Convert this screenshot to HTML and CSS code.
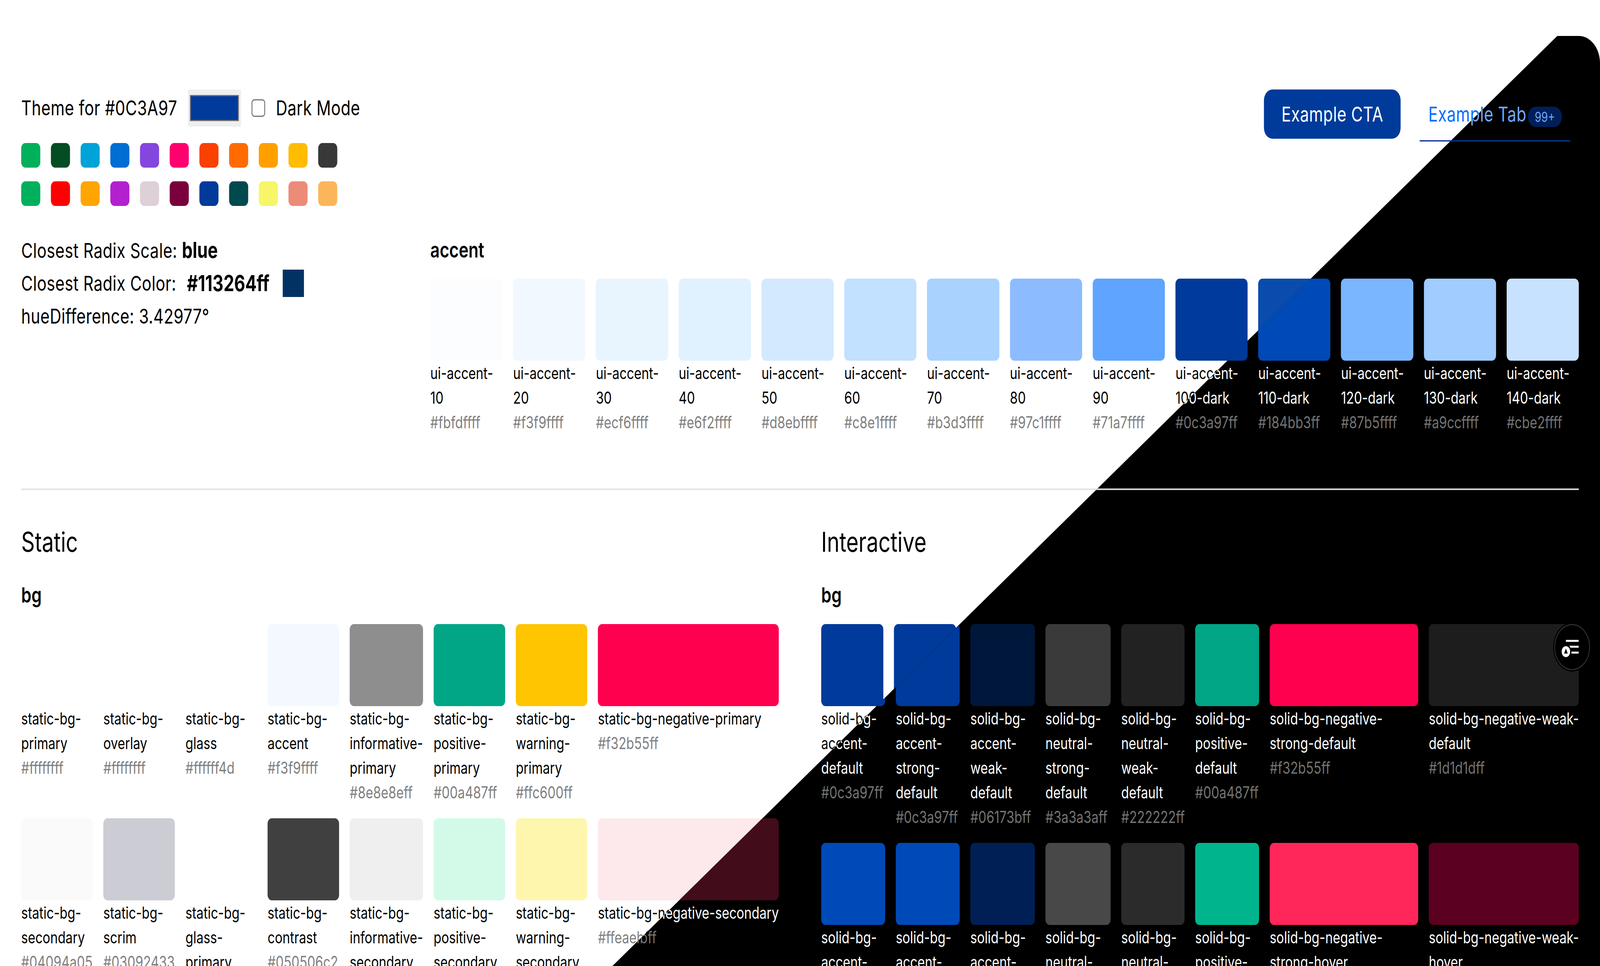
FILE: index.html
```html
<!DOCTYPE html>
<html lang="en">
<head>
<meta charset="utf-8">
<title>Theme preview</title>
<link rel="stylesheet" href="styles.css">
</head>
<body>
<div class="page">

<div class="sheet light">
  <header class="head">
    <div class="brand">
      <div class="picker-row">
        <span>Theme for #0C3A97</span>
        <input class="picker" type="color" value="#003a9b" aria-label="Theme colour">
        <input class="check" type="checkbox" id="dm-l">
        <label for="dm-l">Dark Mode</label>
      </div>
      <div class="presets">
        <i style="background:#00b05c"></i><i style="background:#044d24"></i><i style="background:#00a3d7"></i><i style="background:#006ed3"></i><i style="background:#8347dd"></i><i style="background:#ff006e"></i><i style="background:#fa4100"></i><i style="background:#ff6b00"></i><i style="background:#ffa000"></i><i style="background:#ffbc00"></i><i style="background:#383838"></i>
        <i style="background:#00b05c"></i><i style="background:#ff0000"></i><i style="background:#ffa500"></i><i style="background:#b320cf"></i><i style="background:#ddd0d6"></i><i style="background:#7a003d"></i><i style="background:#003a9b"></i><i style="background:#004a4e"></i><i style="background:#f6f668"></i><i style="background:#ec8b77"></i><i style="background:#fbb65c"></i>
      </div>
    </div>
    <div class="actions">
      <button class="cta" type="button">Example CTA</button>
      <div class="tab"><span>Example Tab</span><span class="badge">99+</span></div>
    </div>
  </header>
  <section class="radix">
    <div class="info">
      <p>Closest Radix Scale: <b>blue</b></p>
      <p class="info-color"><span>Closest Radix Color:</span><b>#113264ff</b><i class="radix-sq"></i></p>
      <p>hueDifference: 3.42977°</p>
    </div>
    <div class="accent">
      <h3>accent</h3>
      <div class="scale">
        <div class="tok"><div class="sw" style="background:#fbfdff"></div><p class="nm">ui-accent-10</p><p class="hx">#fbfdffff</p></div>
        <div class="tok"><div class="sw" style="background:#f1f8ff"></div><p class="nm">ui-accent-20</p><p class="hx">#f3f9ffff</p></div>
        <div class="tok"><div class="sw" style="background:#e8f5ff"></div><p class="nm">ui-accent-30</p><p class="hx">#ecf6ffff</p></div>
        <div class="tok"><div class="sw" style="background:#e0f1ff"></div><p class="nm">ui-accent-40</p><p class="hx">#e6f2ffff</p></div>
        <div class="tok"><div class="sw" style="background:#d3e9ff"></div><p class="nm">ui-accent-50</p><p class="hx">#d8ebffff</p></div>
        <div class="tok"><div class="sw" style="background:#c2e0ff"></div><p class="nm">ui-accent-60</p><p class="hx">#c8e1ffff</p></div>
        <div class="tok"><div class="sw" style="background:#a9d2ff"></div><p class="nm">ui-accent-70</p><p class="hx">#b3d3ffff</p></div>
        <div class="tok"><div class="sw" style="background:#8cbcff"></div><p class="nm">ui-accent-80</p><p class="hx">#97c1ffff</p></div>
        <div class="tok"><div class="sw" style="background:#5fa4ff"></div><p class="nm">ui-accent-90</p><p class="hx">#71a7ffff</p></div>
        <div class="tok"><div class="sw" style="background:#003a9b"></div><p class="nm">ui-accent-100-dark</p><p class="hx">#0c3a97ff</p></div>
        <div class="tok"><div class="sw" style="background:#0a4cad"></div><p class="nm">ui-accent-110-dark</p><p class="hx">#184bb3ff</p></div>
        <div class="tok"><div class="sw" style="background:#7ab5ff"></div><p class="nm">ui-accent-120-dark</p><p class="hx">#87b5ffff</p></div>
        <div class="tok"><div class="sw" style="background:#a0ccff"></div><p class="nm">ui-accent-130-dark</p><p class="hx">#a9ccffff</p></div>
        <div class="tok"><div class="sw" style="background:#c6e2ff"></div><p class="nm">ui-accent-140-dark</p><p class="hx">#cbe2ffff</p></div>
      </div>
    </div>
  </section>
  <hr class="rule">
  <section class="cols">
    <div class="col">
      <h2>Static</h2>
      <h3>bg</h3>
      <div class="tokens static">
        <div class="tok"><div class="sw" style="background:#ffffff"></div><p class="nm">static-bg-primary</p><p class="hx">#ffffffff</p></div>
        <div class="tok"><div class="sw" style="background:#ffffff"></div><p class="nm">static-bg-overlay</p><p class="hx">#ffffffff</p></div>
        <div class="tok"><div class="sw" style="background:#ffffff"></div><p class="nm">static-bg-glass</p><p class="hx">#ffffff4d</p></div>
        <div class="tok"><div class="sw" style="background:#f3f9ff"></div><p class="nm">static-bg-accent</p><p class="hx">#f3f9ffff</p></div>
        <div class="tok"><div class="sw" style="background:#8e8e8e"></div><p class="nm">static-bg-informative-primary</p><p class="hx">#8e8e8eff</p></div>
        <div class="tok"><div class="sw" style="background:#00a686"></div><p class="nm">static-bg-positive-primary</p><p class="hx">#00a487ff</p></div>
        <div class="tok"><div class="sw" style="background:#ffc500"></div><p class="nm">static-bg-warning-primary</p><p class="hx">#ffc600ff</p></div>
        <div class="tok"><div class="sw" style="background:#ff004f"></div><p class="nm">static-bg-negative-primary</p><p class="hx">#f32b55ff</p></div>
        <div class="tok"><div class="sw" style="background:#fafafa"></div><p class="nm">static-bg-secondary</p><p class="hx">#04094a05</p></div>
        <div class="tok"><div class="sw" style="background:#cbccd4"></div><p class="nm">static-bg-scrim</p><p class="hx">#03092433</p></div>
        <div class="tok"><div class="sw" style="background:#ffffff"></div><p class="nm">static-bg-glass-primary</p><p class="hx">#ffffff99</p></div>
        <div class="tok"><div class="sw" style="background:#404040"></div><p class="nm">static-bg-contrast</p><p class="hx">#050506c2</p></div>
        <div class="tok"><div class="sw" style="background:#efefef"></div><p class="nm">static-bg-informative-secondary</p><p class="hx">#f0f0f0ff</p></div>
        <div class="tok"><div class="sw" style="background:#d3fae8"></div><p class="nm">static-bg-positive-secondary</p><p class="hx">#d6f9e9ff</p></div>
        <div class="tok"><div class="sw" style="background:#fff6ae"></div><p class="nm">static-bg-warning-secondary</p><p class="hx">#fff6b2ff</p></div>
        <div class="tok"><div class="sw" style="background:#fde8eb"></div><p class="nm">static-bg-negative-secondary</p><p class="hx">#ffeaebff</p></div>
      </div>
    </div>
    <div class="col">
      <h2>Interactive</h2>
      <h3>bg</h3>
      <div class="tokens solid">
        <div class="tok"><div class="sw" style="background:#003a9b"></div><p class="nm">solid-bg-accent-default</p><p class="hx">#0c3a97ff</p></div>
        <div class="tok"><div class="sw" style="background:#003a9b"></div><p class="nm">solid-bg-accent-strong-default</p><p class="hx">#0c3a97ff</p></div>
        <div class="tok"><div class="sw" style="background:#00173c"></div><p class="nm">solid-bg-accent-weak-default</p><p class="hx">#06173bff</p></div>
        <div class="tok"><div class="sw" style="background:#3a3a3a"></div><p class="nm">solid-bg-neutral-strong-default</p><p class="hx">#3a3a3aff</p></div>
        <div class="tok"><div class="sw" style="background:#222222"></div><p class="nm">solid-bg-neutral-weak-default</p><p class="hx">#222222ff</p></div>
        <div class="tok"><div class="sw" style="background:#00a686"></div><p class="nm">solid-bg-positive-default</p><p class="hx">#00a487ff</p></div>
        <div class="tok"><div class="sw" style="background:#ff004f"></div><p class="nm">solid-bg-negative-strong-default</p><p class="hx">#f32b55ff</p></div>
        <div class="tok"><div class="sw" style="background:#1d1d1d"></div><p class="nm">solid-bg-negative-weak-default</p><p class="hx">#1d1d1dff</p></div>
      </div>
    </div>
  </section>
</div>

<div class="dark">
<div class="sheet night">
  <header class="head">
    <div class="brand">
      <div class="picker-row">
        <span>Theme for #0C3A97</span>
        <input class="picker" type="color" value="#003a9b" aria-label="Theme colour, dark">
        <input class="check" type="checkbox" id="dm-d">
        <label for="dm-d">Dark Mode</label>
      </div>
      <div class="presets">
        <i style="background:#00b05c"></i><i style="background:#044d24"></i><i style="background:#00a3d7"></i><i style="background:#006ed3"></i><i style="background:#8347dd"></i><i style="background:#ff006e"></i><i style="background:#fa4100"></i><i style="background:#ff6b00"></i><i style="background:#ffa000"></i><i style="background:#ffbc00"></i><i style="background:#383838"></i>
        <i style="background:#00b05c"></i><i style="background:#ff0000"></i><i style="background:#ffa500"></i><i style="background:#b320cf"></i><i style="background:#ddd0d6"></i><i style="background:#7a003d"></i><i style="background:#003a9b"></i><i style="background:#004a4e"></i><i style="background:#f6f668"></i><i style="background:#ec8b77"></i><i style="background:#fbb65c"></i>
      </div>
    </div>
    <div class="actions">
      <button class="cta" type="button">Example CTA</button>
      <div class="tab"><span>Example Tab</span><span class="badge">99+</span></div>
    </div>
  </header>
  <section class="radix">
    <div class="info">
      <p>Closest Radix Scale: <b>blue</b></p>
      <p class="info-color"><span>Closest Radix Color:</span><b>#113264ff</b><i class="radix-sq"></i></p>
      <p>hueDifference: 3.42977°</p>
    </div>
    <div class="accent">
      <h3>accent</h3>
      <div class="scale">
        <div class="tok"><div class="sw" style="background:#fbfdff"></div><p class="nm">ui-accent-10</p><p class="hx">#fbfdffff</p></div>
        <div class="tok"><div class="sw" style="background:#f1f8ff"></div><p class="nm">ui-accent-20</p><p class="hx">#f3f9ffff</p></div>
        <div class="tok"><div class="sw" style="background:#e8f5ff"></div><p class="nm">ui-accent-30</p><p class="hx">#ecf6ffff</p></div>
        <div class="tok"><div class="sw" style="background:#e0f1ff"></div><p class="nm">ui-accent-40</p><p class="hx">#e6f2ffff</p></div>
        <div class="tok"><div class="sw" style="background:#d3e9ff"></div><p class="nm">ui-accent-50</p><p class="hx">#d8ebffff</p></div>
        <div class="tok"><div class="sw" style="background:#c2e0ff"></div><p class="nm">ui-accent-60</p><p class="hx">#c8e1ffff</p></div>
        <div class="tok"><div class="sw" style="background:#a9d2ff"></div><p class="nm">ui-accent-70</p><p class="hx">#b3d3ffff</p></div>
        <div class="tok"><div class="sw" style="background:#8cbcff"></div><p class="nm">ui-accent-80</p><p class="hx">#97c1ffff</p></div>
        <div class="tok"><div class="sw" style="background:#5fa4ff"></div><p class="nm">ui-accent-90</p><p class="hx">#71a7ffff</p></div>
        <div class="tok"><div class="sw" style="background:#003a9b"></div><p class="nm">ui-accent-100-dark</p><p class="hx">#0c3a97ff</p></div>
        <div class="tok"><div class="sw" style="background:#004ab8"></div><p class="nm">ui-accent-110-dark</p><p class="hx">#184bb3ff</p></div>
        <div class="tok"><div class="sw" style="background:#7ab5ff"></div><p class="nm">ui-accent-120-dark</p><p class="hx">#87b5ffff</p></div>
        <div class="tok"><div class="sw" style="background:#a0ccff"></div><p class="nm">ui-accent-130-dark</p><p class="hx">#a9ccffff</p></div>
        <div class="tok"><div class="sw" style="background:#c6e2ff"></div><p class="nm">ui-accent-140-dark</p><p class="hx">#cbe2ffff</p></div>
      </div>
    </div>
  </section>
  <hr class="rule">
  <section class="cols">
    <div class="col">
      <h2>Static</h2>
      <h3>bg</h3>
      <div class="tokens static">
        <div class="tok"><div class="sw" style="background:#000000"></div><p class="nm">static-bg-primary</p><p class="hx">#000000ff</p></div>
        <div class="tok"><div class="sw" style="background:#111111"></div><p class="nm">static-bg-overlay</p><p class="hx">#111111ff</p></div>
        <div class="tok"><div class="sw" style="background:#000000"></div><p class="nm">static-bg-glass</p><p class="hx">#0000004d</p></div>
        <div class="tok"><div class="sw" style="background:#06173b"></div><p class="nm">static-bg-accent</p><p class="hx">#06173bff</p></div>
        <div class="tok"><div class="sw" style="background:#8e8e8e"></div><p class="nm">static-bg-informative-primary</p><p class="hx">#8e8e8eff</p></div>
        <div class="tok"><div class="sw" style="background:#00a686"></div><p class="nm">static-bg-positive-primary</p><p class="hx">#00a487ff</p></div>
        <div class="tok"><div class="sw" style="background:#ffc500"></div><p class="nm">static-bg-warning-primary</p><p class="hx">#ffc600ff</p></div>
        <div class="tok"><div class="sw" style="background:#ff004f"></div><p class="nm">static-bg-negative-primary</p><p class="hx">#f32b55ff</p></div>
        <div class="tok"><div class="sw" style="background:#111111"></div><p class="nm">static-bg-secondary</p><p class="hx">#ffffff08</p></div>
        <div class="tok"><div class="sw" style="background:#333333"></div><p class="nm">static-bg-scrim</p><p class="hx">#00000080</p></div>
        <div class="tok"><div class="sw" style="background:#000000"></div><p class="nm">static-bg-glass-primary</p><p class="hx">#00000099</p></div>
        <div class="tok"><div class="sw" style="background:#e5e5e5"></div><p class="nm">static-bg-contrast</p><p class="hx">#ffffffe5</p></div>
        <div class="tok"><div class="sw" style="background:#222222"></div><p class="nm">static-bg-informative-secondary</p><p class="hx">#222222ff</p></div>
        <div class="tok"><div class="sw" style="background:#003a2e"></div><p class="nm">static-bg-positive-secondary</p><p class="hx">#003a2eff</p></div>
        <div class="tok"><div class="sw" style="background:#4a3a00"></div><p class="nm">static-bg-warning-secondary</p><p class="hx">#4a3a00ff</p></div>
        <div class="tok"><div class="sw" style="background:#420c1a"></div><p class="nm">static-bg-negative-secondary</p><p class="hx">#420f1bff</p></div>
      </div>
    </div>
    <div class="col">
      <h2>Interactive</h2>
      <h3>bg</h3>
      <div class="tokens solid">
        <div class="tok"><div class="sw" style="background:#003a9b"></div><p class="nm">solid-bg-accent-default</p><p class="hx">#0c3a97ff</p></div>
        <div class="tok"><div class="sw" style="background:#003a9b"></div><p class="nm">solid-bg-accent-strong-default</p><p class="hx">#0c3a97ff</p></div>
        <div class="tok"><div class="sw" style="background:#00173c"></div><p class="nm">solid-bg-accent-weak-default</p><p class="hx">#06173bff</p></div>
        <div class="tok"><div class="sw" style="background:#3a3a3a"></div><p class="nm">solid-bg-neutral-strong-default</p><p class="hx">#3a3a3aff</p></div>
        <div class="tok"><div class="sw" style="background:#222222"></div><p class="nm">solid-bg-neutral-weak-default</p><p class="hx">#222222ff</p></div>
        <div class="tok"><div class="sw" style="background:#00a686"></div><p class="nm">solid-bg-positive-default</p><p class="hx">#00a487ff</p></div>
        <div class="tok"><div class="sw" style="background:#ff004f"></div><p class="nm">solid-bg-negative-strong-default</p><p class="hx">#f32b55ff</p></div>
        <div class="tok"><div class="sw" style="background:#1d1d1d"></div><p class="nm">solid-bg-negative-weak-default</p><p class="hx">#1d1d1dff</p></div>
        <div class="tok"><div class="sw" style="background:#004ab8"></div><p class="nm">solid-bg-accent-hover</p><p class="hx">#184bb3ff</p></div>
        <div class="tok"><div class="sw" style="background:#004ab8"></div><p class="nm">solid-bg-accent-strong-hover</p><p class="hx">#184bb3ff</p></div>
        <div class="tok"><div class="sw" style="background:#002055"></div><p class="nm">solid-bg-accent-weak-hover</p><p class="hx">#0a2155ff</p></div>
        <div class="tok"><div class="sw" style="background:#484848"></div><p class="nm">solid-bg-neutral-strong-hover</p><p class="hx">#484848ff</p></div>
        <div class="tok"><div class="sw" style="background:#2b2b2b"></div><p class="nm">solid-bg-neutral-weak-hover</p><p class="hx">#2b2b2bff</p></div>
        <div class="tok"><div class="sw" style="background:#00b58e"></div><p class="nm">solid-bg-positive-hover</p><p class="hx">#00b490ff</p></div>
        <div class="tok"><div class="sw" style="background:#ff2659"></div><p class="nm">solid-bg-negative-strong-hover</p><p class="hx">#f5435fff</p></div>
        <div class="tok"><div class="sw" style="background:#5b0020"></div><p class="nm">solid-bg-negative-weak-hover</p><p class="hx">#590a22ff</p></div>
      </div>
    </div>
  </section>
</div>
</div>

<button class="fab" type="button" aria-label="Toolbar">
  <svg viewBox="3.5 3.5 111 111" width="111" height="111">
    <rect x="38" y="40" width="42" height="5" fill="#fff"/>
    <rect x="50" y="55" width="30" height="5" fill="#fff"/>
    <rect x="56" y="70" width="24" height="5" fill="#fff"/>
    <circle cx="38" cy="70" r="16" fill="#fff" stroke="#000" stroke-width="4"/>
    <path d="M38 62l6 13H32z" fill="#000"/>
  </svg>
</button>
</div>
</body>
</html>
```

FILE: styles.css
```css
html {
  overflow: hidden;
}

body {
  margin: 0;
  overflow: hidden;
  font-family: Inter, "Liberation Sans", sans-serif;
  font-size: 52.5px;
  letter-spacing: 0.55px;
  line-height: 84px;
  color: #000;
  background: #fff;
}

p, h2, h3 {
  margin: 0;
}

.page {
  position: relative;
  width: 5280px;
  height: 2472px;
  overflow: hidden;
}

/* The renderer clamps its window to 4096px wide; keep the whole 5280px frame in view. */
@media (max-width: 4096px) {
  .page {
    transform: scaleX(0.775758);
    transform-origin: 0 0;
  }
}

.sheet {
  box-sizing: border-box;
  width: 5280px;
  height: 2472px;
  padding: 229px 70px 0;
}

.night {
  color: #fff;
  margin-top: -92px;
}

.dark {
  position: absolute;
  inset: 92px 0 0 0;
  background: #000;
  border-radius: 0 70px 0 0;
  overflow: hidden;
  clip-path: polygon(5139px 0, 100% 0, 100% 100%, 2021px 100%);
}

/* header */
.head {
  display: flex;
  justify-content: space-between;
  align-items: flex-start;
  margin-bottom: 71px;
}

.picker-row {
  display: flex;
  align-items: center;
  gap: 35px;
  height: 94.5px;
}

.picker {
  width: 175px;
  height: 94.5px;
  margin: 0;
  padding: 0;
  border: 0;
  background: #efefef;
}

.picker::-webkit-color-swatch-wrapper {
  padding: 14px 7px;
}

.picker::-webkit-color-swatch {
  border: 3.5px solid #767676;
}

.check {
  appearance: none;
  box-sizing: border-box;
  width: 45.5px;
  height: 45.5px;
  margin: 0;
  border: 3.5px solid #767676;
  border-radius: 9px;
  background: #fff;
}

.presets {
  display: grid;
  grid-template-columns: repeat(11, 63px);
  gap: 35px;
  margin-top: 42px;
}

.presets i {
  display: block;
  height: 63px;
  border-radius: 14px;
}

.actions {
  display: flex;
  align-items: flex-start;
  gap: 63px;
  padding-right: 28px;
}

.cta {
  height: 126px;
  padding: 0 57.75px;
  border: 0;
  border-radius: 28px;
  background: #003a9b;
  color: #fff;
  font: 400 52.5px/84px Inter, "Liberation Sans", sans-serif;
  letter-spacing: 0.55px;
}

.tab {
  display: flex;
  align-items: center;
  gap: 5px;
  padding: 21px 28px 24.5px;
  border-bottom: 3.5px solid #00249b;
  color: #0a6dff;
}

.night .tab {
  border-bottom-color: #003a9b;
  color: #71a7ff;
}

.badge {
  box-sizing: border-box;
  width: 112px;
  height: 52.5px;
  margin-top: 14px;
  border-radius: 28px;
  background: #001f59;
  color: #6ba8ff;
  font-size: 35px;
  letter-spacing: 0;
  line-height: 52.5px;
  text-align: center;
}

/* radix row */
.radix {
  display: flex;
}

.info {
  flex: 0 0 1350px;
}

.info b {
  font-size: 56px;
  font-weight: 700;
  letter-spacing: 0;
}

.info-color {
  display: flex;
  align-items: center;
  gap: 35px;
}

.radix-sq {
  display: block;
  width: 70px;
  height: 70px;
  margin-left: 9px;
  background: #023264;
}

.accent {
  flex: 1;
  min-width: 0;
}

h3 {
  font-size: 54px;
  letter-spacing: 0;
  line-height: 84px;
  font-weight: 600;
  margin-bottom: 31.5px;
}

.scale {
  display: flex;
  gap: 35px;
}

.scale .tok {
  flex: 1 1 0;
}

.tok {
  min-width: 0;
}

.sw {
  height: 210px;
  border-radius: 14px;
}

.nm,
.hx {
  font-size: 42px;
  letter-spacing: 0;
  line-height: 63px;
}

.hx {
  color: #808080;
}

.night .hx {
  color: #737373;
}

.rule {
  height: 3.5px;
  margin: 138px 0 70px;
  border: 0;
  background: #e4e4ea;
}

.night .rule {
  background: #d6d6da;
}

/* token sections */
.cols {
  display: flex;
  gap: 140px;
}

.col {
  flex: 1 1 0;
  min-width: 0;
}

h2 {
  font-size: 70px;
  letter-spacing: 0;
  line-height: 126px;
  font-weight: 400;
  margin-bottom: 31.5px;
}

.tokens {
  display: grid;
  gap: 35px;
}

.static {
  grid-template-columns: repeat(7, minmax(min-content, 1fr)) max-content;
}

.solid {
  grid-template-columns: 211px 211px 213px 215px 209px 211px 490px 1fr;
}

.light .solid {
  grid-template-columns: 205px 205px 213px 215px 209px 211px 490px 1fr;
}

/* the last column's label fills it edge to edge in the reference */
.solid .tok:nth-child(8n) .nm {
  margin-right: -14px;
}

/* floating toolbar button */
.fab {
  position: absolute;
  top: 1597px;
  right: 33px;
  display: flex;
  align-items: center;
  justify-content: center;
  box-sizing: border-box;
  width: 118px;
  height: 118px;
  padding: 0;
  border: 3.5px solid #2e2e2e;
  border-radius: 50%;
  background: #000;
  box-shadow: 0 0 0 3.5px #000;
}

.fab svg {
  display: block;
}
```
